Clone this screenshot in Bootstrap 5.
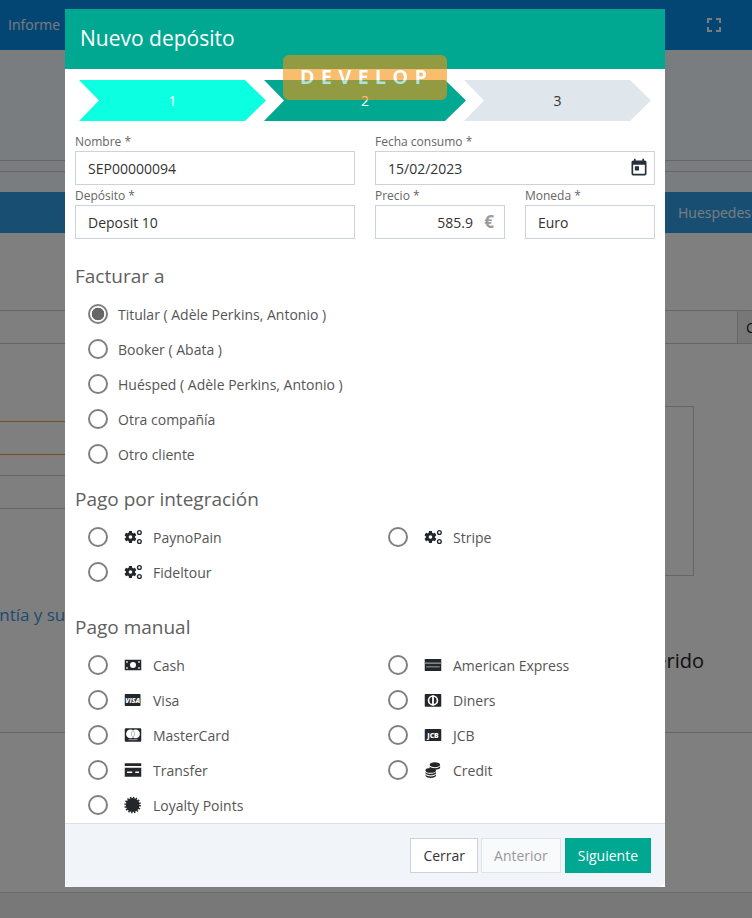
<!DOCTYPE html>
<html lang="es">
<head>
<meta charset="utf-8">
<title>Nuevo depósito</title>
<link href="https://cdn.jsdelivr.net/npm/bootstrap@5.3.0/dist/css/bootstrap.min.css" rel="stylesheet">
<style>
html,body{height:100%;overflow:hidden}
body{font-family:"Open Sans","Liberation Sans",sans-serif;font-size:14px;color:#333;background:#fff}
/* page behind the dialog */
.pg{height:918px;overflow:hidden}
.pg-top{height:50px;background:#068ce6;color:#f4f8fb;padding:0 30px 0 8px}
.pg-top span{margin-top:-2px}
.pg-hero{height:111px;background:#f4fafe;border-bottom:1px solid #ccc}
.pg-strip{height:11px;background:#f4fafe;border-bottom:1px solid #ccc}
.pg-gap1{height:20px;background:#f4fafe}
.pg-band{height:41px;background:#309ce4;color:#f4fbff;white-space:nowrap;overflow:hidden}
.pg-band span{margin-left:678px}
.pg-gap2{height:77px}
.pg-tr{height:34px;border-top:1px solid #ccc;border-bottom:1px solid #ccc}
.pg-cell{width:15px;border-left:1px solid #ccc;background:#eee;color:#222;font-size:14px;padding-left:8px;overflow:hidden}
.pg-gap3{height:62px}
.pg-mid{height:170px}
.pg-lines{width:100px;padding-top:15px;margin-right:100px}
.pg-o{height:34px;border-top:1px solid #f09a2c;border-bottom:1px solid #f09a2c}
.pg-g{height:34px;border-top:1px solid #ccc;border-bottom:1px solid #ccc;margin-top:20px}
.pg-box{width:494px;border:1px solid #ccc}
.pg-link{color:#3a96e0;font-size:17px;line-height:25px;margin:26px 0 0 -39px;white-space:nowrap}
.pg-req{font-size:20px;line-height:28px;color:#222;margin-top:20px;padding-right:48px}
.pg-line{margin-top:57px;height:160px;border-top:1px solid #ccc}
.pg-end{height:26px;background:#f0f0f0;border-top:1px solid #ddd}
/* dialog */
.dlg{max-width:none!important;width:600px;margin:9px 0 0 65px!important}
.dlg-box{height:878px;border:0;border-radius:0;overflow:hidden;position:relative}
.dlg-head{height:60px;background:#00a892;color:#fff;padding:0 15px 2px;border:0;border-radius:0}
.dlg-title{font-size:21px;font-weight:400;line-height:28px;margin:0}
.dlg-body{padding:11px 10px 0;flex:1 1 auto}
.ribbon{position:absolute;left:218px;top:46px;width:164px;height:45px;border-radius:6px;background:rgba(243,146,11,.6);text-align:center;z-index:5}
.ribbon-t{display:block;width:164px;height:45px;font-size:20px;font-weight:700;line-height:44px;letter-spacing:6.2px;text-indent:3px;color:transparent;background:linear-gradient(#fff 0,#fff 25px,#aee2dc 25px,#aee2dc 45px);-webkit-background-clip:text;background-clip:text}
.steps{padding-left:4px}
.stp{height:41px;line-height:41px;text-align:center;font-size:14px;margin-right:-2px}
.stp-a{width:187px;background:#0cffe1;color:#fff;clip-path:polygon(0 0,166px 0,187px 50%,166px 100%,0 100%,20px 50%)}
.stp-b{width:202px;background:#00a892;color:#fff;clip-path:polygon(0 0,181px 0,202px 50%,181px 100%,0 100%,20px 50%)}
.stp-c{width:187px;background:#dfe7ec;color:#333;clip-path:polygon(0 0,166px 0,187px 50%,166px 100%,0 100%,20px 50%)}
.frm-row{--bs-gutter-x:20px;--bs-gutter-y:0}
.frm-top{margin-top:10px}
.frm-lbl{display:block;font-size:12px;height:20px;line-height:22px;color:#666;margin:0}
.frm-in{height:34px;border-radius:0;border:1px solid #ccd3dd;padding:0 12px;font-size:14px;color:#333;font-family:inherit}
.frm-num{text-align:right;padding-right:31px}
.frm-ico{position:absolute;right:6px;top:7px;width:20px;height:20px;fill:#27303a}
.frm-eur{position:absolute;right:11px;top:0;line-height:34px;color:#999;font-weight:700;font-size:17px}
.sec{font-size:19px;line-height:24px;color:#606060;font-weight:400;margin:0}
.sec-1{margin:25px 0 8.5px}
.sec-2{margin:15.5px 0 8.5px}
.sec-3{margin:25.5px 0 8.5px}
.opt{height:35px;padding-left:13px;margin:0;color:#555;min-height:0}
.opt .form-check-input{float:none;margin:0;width:20px;height:20px;background:#fff;background-image:none;border:2px solid #808080;flex:none}
.opt .form-check-input:checked{background:#fff radial-gradient(circle,#666 0,#666 6px,transparent 6.6px);border-color:#808080}
.opt-t{margin-left:10px;line-height:35px}
.opt-i{width:18px;height:18px;margin-left:16px;flex:none;fill:#23272b}
.opt-x{margin-left:11px}
.dlg-foot{height:64px;background:#f1f5f9;border-top:1px solid #dee2e6;padding:0 14px;flex:none;gap:4px}
.bt{height:35px;border-radius:0;padding:0 12px;font-size:14px;line-height:33px;font-family:inherit;margin:0}
.bt-w{background:#fff;border:1px solid #ccd3dd;color:#333;margin-right:-1px}
.bt-d{background:#f8fafc;border:1px solid #dde3ea;color:#999}
.bt-p{background:#00a892;border:1px solid #00a892;color:#fff}
.ico-t{font-family:"Open Sans",sans-serif;font-size:9px;font-weight:800;fill:#fff}
</style>
</head>
<body>
<svg width="0" height="0" class="d-block" aria-hidden="true">
  <symbol id="i-cogs" viewBox="0 0 24 24">
    <g transform="translate(-1 2.4) scale(.8)"><path d="M12,15A3,3 0 0,1 9,12A3,3 0 0,1 12,9A3,3 0 0,1 15,12A3,3 0 0,1 12,15M19.43,12.97C19.47,12.65 19.5,12.33 19.5,12C19.5,11.67 19.47,11.34 19.43,11L21.54,9.37C21.73,9.22 21.78,8.95 21.66,8.73L19.66,5.27C19.54,5.05 19.27,4.96 19.05,5.05L16.56,6.05C16.04,5.66 15.5,5.32 14.87,5.07L14.5,2.42C14.46,2.18 14.25,2 14,2H10C9.75,2 9.54,2.18 9.5,2.42L9.13,5.07C8.5,5.32 7.96,5.66 7.44,6.05L4.95,5.05C4.73,4.96 4.46,5.05 4.34,5.27L2.34,8.73C2.21,8.95 2.27,9.22 2.46,9.37L4.57,11C4.53,11.34 4.5,11.67 4.5,12C4.5,12.33 4.53,12.65 4.57,12.97L2.46,14.63C2.27,14.78 2.21,15.05 2.34,15.27L4.34,18.73C4.46,18.95 4.73,19.03 4.95,18.95L7.44,17.94C7.96,18.34 8.5,18.68 9.13,18.93L9.5,21.58C9.54,21.82 9.75,22 10,22H14C14.25,22 14.46,21.82 14.5,21.58L14.87,18.93C15.5,18.67 16.04,18.34 16.56,17.94L19.05,18.95C19.27,19.03 19.54,18.95 19.66,18.73L21.66,15.27C21.78,15.05 21.73,14.78 21.54,14.63L19.43,12.97Z"/></g>
    <circle cx="20.5" cy="6" r="2.5" fill="none" stroke="#23272b" stroke-width="1.8"/>
    <circle cx="20.5" cy="18" r="2.5" fill="none" stroke="#23272b" stroke-width="1.8"/>
  </symbol>
  <symbol id="i-cash" viewBox="0 0 24 24"><path d="M1,5H23V19H1V5M12,8A4,4 0 0,1 16,12A4,4 0 0,1 12,16A4,4 0 0,1 8,12A4,4 0 0,1 12,8M3,7V9H5V7H3M19,7V9H21V7H19M3,15V17H5V15H3M19,15V17H21V15H19Z" fill-rule="evenodd"/></symbol>
  <symbol id="i-mc" viewBox="0 0 24 24"><rect x="1" y="3" width="22" height="18" rx="1.5"/><circle cx="8.6" cy="10.5" r="5.8" fill="#fff"/><circle cx="15.4" cy="10.5" r="5.8" fill="#fff"/><path d="M12,6A5.8,5.8 0 0 0 12,15M12,6A5.8,5.8 0 0 1 12,15" fill="none" stroke="#8a8f94" stroke-width=".8"/><rect x="6" y="17.6" width="12" height="1.3" fill="#fff" opacity=".55"/></symbol>
  <symbol id="i-card" viewBox="0 0 24 24"><path fill-rule="evenodd" d="M1,3H23V21H1V3M1,6.5V9H23V6.5H1M4,14V16H11V14H4M15,14V16H20V14H15Z"/></symbol>
  <symbol id="i-seal" viewBox="0 0 24 24"><circle cx="11.5" cy="12" r="9.2"/><circle cx="11.5" cy="12" r="9.8" fill="none" stroke="#23272b" stroke-width="2.6" stroke-dasharray="1.92 1.93"/></symbol>
  <symbol id="i-amex" viewBox="0 0 24 24"><rect x="1" y="4" width="22" height="16" rx=".8"/><rect x="1" y="8.5" width="22" height="2.2" fill="#7d8388"/><rect x="3" y="13.5" width="18" height="1.8" fill="#7d8388"/></symbol>
  <symbol id="i-din" viewBox="0 0 24 24"><rect x="1" y="4" width="22" height="17" rx="1"/><circle cx="12" cy="12.5" r="7" fill="#fff"/><circle cx="12" cy="12.5" r="4.8" fill="#23272b"/><rect x="10.8" y="6" width="2.4" height="13" fill="#fff"/></symbol>
  <symbol id="i-coin" viewBox="0 0 24 24"><ellipse cx="14.5" cy="5" rx="7" ry="3.4"/><path d="M7.5,7.4C9,9.3 12,9.8 14.5,9.6C17.5,9.5 20,8.6 21.5,7V9.2C20.5,10.6 18,11.4 15,11.5C12,11.6 9,11 7.5,9.6Z"/><ellipse cx="9" cy="12.5" rx="7" ry="3.2"/><path d="M2,14.5C3.5,16.4 6.5,17 9,17C12,17 15,16 16,14.5V16.5C15,18 12,19 9,19C6,19 3,18 2,16.5ZM2,18C3.5,20 6.5,20.6 9,20.6C12,20.6 15,19.6 16,18V20C15,21.6 12,22.5 9,22.5C6,22.5 3,21.6 2,20Z"/></symbol>
</svg>

<div class="pg">
  <div class="pg-top d-flex align-items-center justify-content-between">
    <span>Informe</span>
    <svg width="16" height="16" viewBox="4 4 16 16" fill="#f4f8fb" aria-hidden="true"><path d="M5,5H10V7H7V10H5V5M14,5H19V10H17V7H14V5M17,14H19V19H14V17H17V14M10,17V19H5V14H7V17H10Z"/></svg>
  </div>
  <div class="pg-hero"></div>
  <div class="pg-strip"></div>
  <div class="pg-gap1"></div>
  <div class="pg-band d-flex align-items-center"><span>Huespedes</span></div>
  <div class="pg-gap2"></div>
  <div class="pg-tr d-flex justify-content-end"><div class="pg-cell d-flex align-items-center">C</div></div>
  <div class="pg-gap3"></div>
  <div class="pg-mid d-flex">
    <div class="pg-lines"><div class="pg-o"></div><div class="pg-g"></div></div>
    <div class="pg-box"></div>
  </div>
  <div class="pg-link">Garantía y sugerencias</div>
  <div class="pg-req text-end">Requerido</div>
  <div class="pg-line"></div>
  <div class="pg-end"></div>
</div>

<div class="modal-backdrop show"></div>
<div class="modal d-block" tabindex="-1">
  <div class="modal-dialog dlg">
    <div class="modal-content dlg-box">
      <div class="ribbon"><span class="ribbon-t">DEVELOP</span></div>
      <div class="modal-header dlg-head">
        <h5 class="modal-title dlg-title">Nuevo depósito</h5>
      </div>
      <div class="modal-body dlg-body">
        <div class="d-flex steps">
          <div class="stp stp-a">1</div>
          <div class="stp stp-b">2</div>
          <div class="stp stp-c">3</div>
        </div>
        <div class="row frm-row frm-top">
          <div class="col-6">
            <label class="frm-lbl">Nombre *</label>
            <input class="form-control frm-in" value="SEP00000094">
          </div>
          <div class="col-6">
            <label class="frm-lbl">Fecha consumo *</label>
            <div class="position-relative">
              <input class="form-control frm-in" value="15/02/2023">
              <svg class="frm-ico" viewBox="0 0 24 24" aria-hidden="true"><path d="M7,10H12V15H7M19,19H5V8H19M19,3H18V1H16V3H8V1H6V3H5C3.89,3 3,3.9 3,5V19A2,2 0 0,0 5,21H19A2,2 0 0,0 21,19V5A2,2 0 0,0 19,3Z"/></svg>
            </div>
          </div>
          <div class="col-6">
            <label class="frm-lbl">Depósito *</label>
            <input class="form-control frm-in" value="Deposit 10">
          </div>
          <div class="col-6">
            <div class="row frm-row">
              <div class="col-6">
                <label class="frm-lbl">Precio *</label>
                <div class="position-relative">
                  <input class="form-control frm-in frm-num" value="585.9">
                  <span class="frm-eur">€</span>
                </div>
              </div>
              <div class="col-6">
                <label class="frm-lbl">Moneda *</label>
                <input class="form-control frm-in" value="Euro">
              </div>
            </div>
          </div>
        </div>

        <h6 class="sec sec-1">Facturar a</h6>
        <div class="form-check d-flex align-items-center opt"><input class="form-check-input" type="radio" name="fa" checked><span class="opt-t">Titular ( Adèle Perkins, Antonio )</span></div>
        <div class="form-check d-flex align-items-center opt"><input class="form-check-input" type="radio" name="fa"><span class="opt-t">Booker ( Abata )</span></div>
        <div class="form-check d-flex align-items-center opt"><input class="form-check-input" type="radio" name="fa"><span class="opt-t">Huésped ( Adèle Perkins, Antonio )</span></div>
        <div class="form-check d-flex align-items-center opt"><input class="form-check-input" type="radio" name="fa"><span class="opt-t">Otra compañía</span></div>
        <div class="form-check d-flex align-items-center opt"><input class="form-check-input" type="radio" name="fa"><span class="opt-t">Otro cliente</span></div>

        <h6 class="sec sec-2">Pago por integración</h6>
        <div class="row frm-row">
          <div class="col-6"><div class="form-check d-flex align-items-center opt"><input class="form-check-input" type="radio" name="pg"><svg class="opt-i"><use href="#i-cogs"/></svg><span class="opt-t opt-x">PaynoPain</span></div></div>
          <div class="col-6"><div class="form-check d-flex align-items-center opt"><input class="form-check-input" type="radio" name="pg"><svg class="opt-i"><use href="#i-cogs"/></svg><span class="opt-t opt-x">Stripe</span></div></div>
          <div class="col-6"><div class="form-check d-flex align-items-center opt"><input class="form-check-input" type="radio" name="pg"><svg class="opt-i"><use href="#i-cogs"/></svg><span class="opt-t opt-x">Fideltour</span></div></div>
        </div>

        <h6 class="sec sec-3">Pago manual</h6>
        <div class="row frm-row">
          <div class="col-6"><div class="form-check d-flex align-items-center opt"><input class="form-check-input" type="radio" name="pg"><svg class="opt-i"><use href="#i-cash"/></svg><span class="opt-t opt-x">Cash</span></div></div>
          <div class="col-6"><div class="form-check d-flex align-items-center opt"><input class="form-check-input" type="radio" name="pg"><svg class="opt-i"><use href="#i-amex"/></svg><span class="opt-t opt-x">American Express</span></div></div>
          <div class="col-6"><div class="form-check d-flex align-items-center opt"><input class="form-check-input" type="radio" name="pg"><svg class="opt-i" viewBox="0 0 24 24"><rect x="1" y="4" width="21" height="16" rx="1"/><text x="11.5" y="15.5" text-anchor="middle" class="ico-t" font-style="italic">VISA</text></svg><span class="opt-t opt-x">Visa</span></div></div>
          <div class="col-6"><div class="form-check d-flex align-items-center opt"><input class="form-check-input" type="radio" name="pg"><svg class="opt-i"><use href="#i-din"/></svg><span class="opt-t opt-x">Diners</span></div></div>
          <div class="col-6"><div class="form-check d-flex align-items-center opt"><input class="form-check-input" type="radio" name="pg"><svg class="opt-i"><use href="#i-mc"/></svg><span class="opt-t opt-x">MasterCard</span></div></div>
          <div class="col-6"><div class="form-check d-flex align-items-center opt"><input class="form-check-input" type="radio" name="pg"><svg class="opt-i" viewBox="0 0 24 24"><rect x="1" y="4" width="22" height="16" rx="1"/><text x="12" y="15.5" text-anchor="middle" class="ico-t">JCB</text></svg><span class="opt-t opt-x">JCB</span></div></div>
          <div class="col-6"><div class="form-check d-flex align-items-center opt"><input class="form-check-input" type="radio" name="pg"><svg class="opt-i"><use href="#i-card"/></svg><span class="opt-t opt-x">Transfer</span></div></div>
          <div class="col-6"><div class="form-check d-flex align-items-center opt"><input class="form-check-input" type="radio" name="pg"><svg class="opt-i"><use href="#i-coin"/></svg><span class="opt-t opt-x">Credit</span></div></div>
          <div class="col-6"><div class="form-check d-flex align-items-center opt"><input class="form-check-input" type="radio" name="pg"><svg class="opt-i"><use href="#i-seal"/></svg><span class="opt-t opt-x">Loyalty Points</span></div></div>
        </div>
      </div>
      <div class="modal-footer dlg-foot d-flex align-items-center justify-content-end">
        <button type="button" class="btn bt bt-w">Cerrar</button>
        <button type="button" class="btn bt bt-d">Anterior</button>
        <button type="button" class="btn bt bt-p">Siguiente</button>
      </div>
    </div>
  </div>
</div>
<script src="https://cdn.jsdelivr.net/npm/bootstrap@5.3.0/dist/js/bootstrap.bundle.min.js"></script>
</body>
</html>
